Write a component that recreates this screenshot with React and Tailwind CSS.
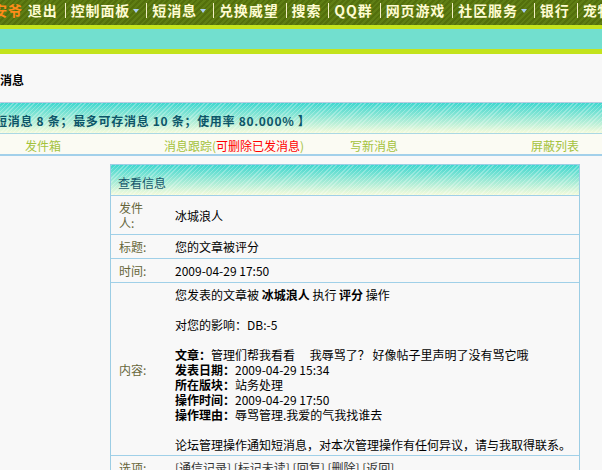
import React from 'react';

const navItems = [
    { t: '控制面板', arrow: true },
    { t: '短消息', arrow: true },
    { t: '兑换威望' },
    { t: '搜索' },
    { t: 'QQ群' },
    { t: '网页游戏' },
    { t: '社区服务', arrow: true },
    { t: '银行' },
    { t: '宠物' },
];

function Arrow() {
    return (
        <svg className="ml-[3px] mt-[7px] shrink-0" width="6" height="4" viewBox="0 0 6 4">
            <polygon points="0,0 6,0 3,4" fill="#a9cdf2" />
        </svg>
    );
}

function Sep() {
    return <span className="ml-[7px] mr-[5px] mt-[1px] w-px h-[15px] shrink-0 bg-[#f2eec4]" />;
}

function Row({ label, children, pad = 'py-[4px]', last }) {
    return (
        <div className={`flex ${last ? '' : 'border-b border-[#a0d0e8]'}`}>
            <div className="w-[57px] shrink-0 pl-[8px] pr-[13px] py-[4px] flex items-center text-[#66663a]">{label}</div>
            <div className={`flex-1 pl-[7px] ${pad} flex items-center`}>{children}</div>
        </div>
    );
}

export default function App() {
    const stripe = "bg-[repeating-linear-gradient(135deg,rgba(255,255,255,0.28)_0_1px,rgba(255,255,255,0)_1px_3px),linear-gradient(to_bottom,#3fd7cf,#f5fbdc)]";

    return (
        <div className="w-[602px] h-[470px] overflow-hidden bg-[#f8f8f8] font-['Noto_Sans_CJK_SC','Liberation_Sans',sans-serif] text-[12px] leading-[15px] text-black">
            {/* top nav */}
            <nav className="h-[25px] flex items-start whitespace-nowrap overflow-hidden pt-[2px] text-[14px] leading-[16px] font-bold tracking-[0.9px] text-[#fffcd2] bg-[repeating-linear-gradient(135deg,#5f7e14_0_2px,#536f0c_2px_4px)]">
                <span className="-ml-[7px] text-[#ff8c1a]">安爷</span>
                <span className="ml-[5px]">退出</span>
                {navItems.map(item => (
                    <React.Fragment key={item.t}>
                        <Sep />
                        <span>{item.t}</span>
                        {item.arrow && <Arrow />}
                    </React.Fragment>
                ))}
            </nav>
            <div className="h-[4px] bg-[#c3e31d]" />
            <div className="h-[20px] bg-[#72dfcf]" />
            <div className="h-[5px] bg-[#c3e31d]" />

            {/* title */}
            <div className="h-[48px] pt-[18px] font-bold">消息</div>

            {/* summary band */}
            <div className={`h-[31px] border-t border-[#b6cbe0] pt-[4px] flex items-center whitespace-nowrap ${stripe}`}>
                <span className="-ml-[5px] font-bold tracking-[0.7px] text-[#0d5568]">短消息 8 条；最多可存消息 10 条；使用率 80.000% 】</span>
            </div>
            <div className="h-[23px] border-t border-[#aad8e4] border-b-2 border-b-[#a2d0ea] bg-[#fbfbf3] flex items-center pt-[2px] text-[#a4c23c] whitespace-nowrap">
                <div className="w-[164px] pl-[25px]">发件箱</div>
                <div className="w-[186px]">消息跟踪(<span className="text-[#ff0000]">可删除已发消息</span>)</div>
                <div className="w-[181px]">写新消息</div>
                <div>屏蔽列表</div>
            </div>

            {/* message table */}
            <div className="mt-[8px] ml-[110px] w-[470px] border border-[#9ccde4]">
                <div className={`h-[31px] pt-[10px] pl-[7px] border-b border-[#a0d0e8] text-[#17576b] ${stripe}`}>查看信息</div>
                <Row label="发件人:">冰城浪人</Row>
                <Row label="标题:">您的文章被评分</Row>
                <Row label="时间:">2009-04-29 17:50</Row>
                <Row label="内容:" pad="pt-[4px] pb-[3px]">
                    <div>
                        <div>您发表的文章被 <b>冰城浪人</b> 执行 <b>评分</b> 操作</div>
                        <div className="h-[15px]" />
                        <div>对您的影响：DB:-5</div>
                        <div className="h-[15px]" />
                        <div><b>文章：</b>管理们帮我看看　 我辱骂了？ 好像帖子里声明了没有骂它哦</div>
                        <div><b>发表日期：</b>2009-04-29 15:34</div>
                        <div><b>所在版块：</b>站务处理</div>
                        <div><b>操作时间：</b>2009-04-29 17:50</div>
                        <div><b>操作理由：</b>辱骂管理.我爱的气我找谁去</div>
                        <div className="h-[15px]" />
                        <div>论坛管理操作通知短消息，对本次管理操作有任何异议，请与我取得联系。</div>
                    </div>
                </Row>
                <Row label="选项:" last>
                    <span className="text-[#333333] whitespace-nowrap">[通信记录] [标记未读] [回复] [删除] [返回]</span>
                </Row>
            </div>
        </div>
    );
}
